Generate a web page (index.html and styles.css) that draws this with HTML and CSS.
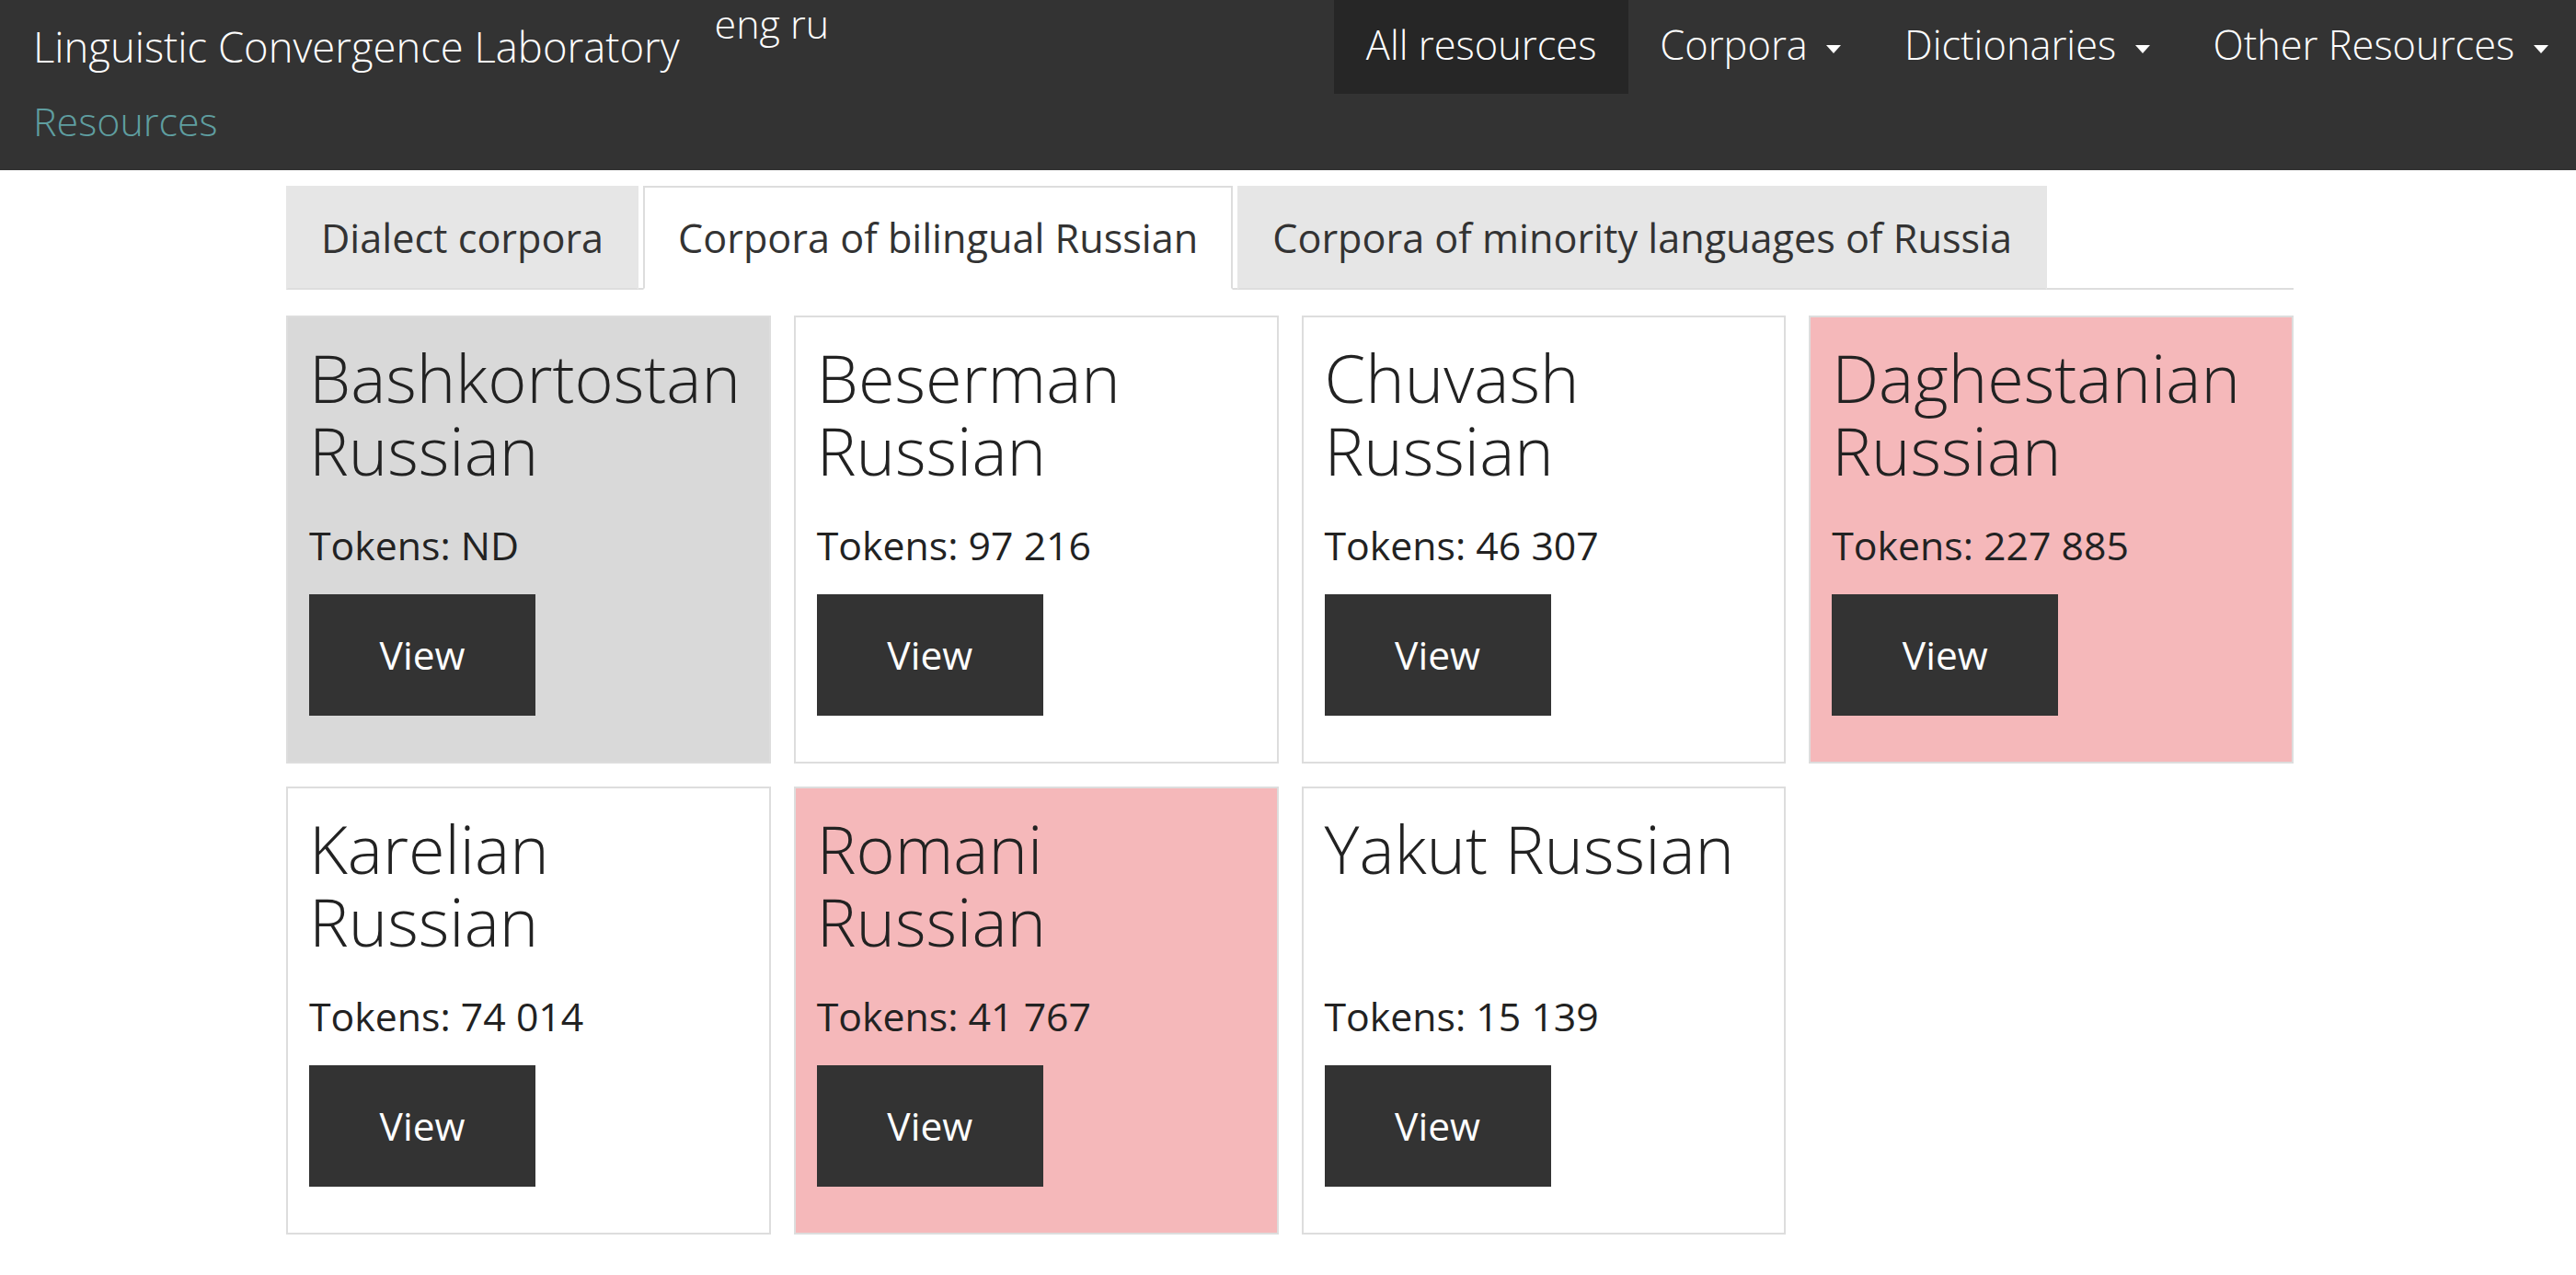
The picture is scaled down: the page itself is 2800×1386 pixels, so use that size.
FILE: index.html
```html
<!DOCTYPE html>
<html lang="en">
<head>
<meta charset="utf-8">
<title>Linguistic Convergence Laboratory — Resources</title>
<link rel="stylesheet" href="styles.css">
</head>
<body>
<header class="navbar">
  <div class="brand-col">
    <div class="brand-row">
      <a class="brand" href="#">Linguistic Convergence Laboratory</a>
      <span class="lang"><a href="#">eng</a> <a href="#">ru</a></span>
    </div>
    <div class="subtitle">Resources</div>
  </div>
  <nav class="menu">
    <a class="menu-item active" href="#">All resources</a>
    <a class="menu-item" href="#">Corpora <span class="caret"></span></a>
    <a class="menu-item" href="#">Dictionaries <span class="caret"></span></a>
    <a class="menu-item" href="#">Other Resources <span class="caret"></span></a>
  </nav>
</header>

<main class="container">
  <ul class="tabs">
    <li class="tab">Dialect corpora</li>
    <li class="tab active">Corpora of bilingual Russian</li>
    <li class="tab">Corpora of minority languages of Russia</li>
  </ul>

  <div class="cards">
    <div class="card card-gray">
      <h1 class="card-title">Bashkortostan Russian</h1>
      <p class="tokens">Tokens: ND</p>
      <a class="btn" href="#">View</a>
    </div>
    <div class="card">
      <h1 class="card-title">Beserman Russian</h1>
      <p class="tokens">Tokens: 97 216</p>
      <a class="btn" href="#">View</a>
    </div>
    <div class="card">
      <h1 class="card-title">Chuvash Russian</h1>
      <p class="tokens">Tokens: 46 307</p>
      <a class="btn" href="#">View</a>
    </div>
    <div class="card card-pink">
      <h1 class="card-title">Daghestanian Russian</h1>
      <p class="tokens">Tokens: 227 885</p>
      <a class="btn" href="#">View</a>
    </div>
    <div class="card">
      <h1 class="card-title">Karelian Russian</h1>
      <p class="tokens">Tokens: 74 014</p>
      <a class="btn" href="#">View</a>
    </div>
    <div class="card card-pink">
      <h1 class="card-title">Romani Russian</h1>
      <p class="tokens">Tokens: 41 767</p>
      <a class="btn" href="#">View</a>
    </div>
    <div class="card">
      <h1 class="card-title">Yakut Russian</h1>
      <p class="tokens">Tokens: 15 139</p>
      <a class="btn" href="#">View</a>
    </div>
  </div>
</main>
</body>
</html>
```
FILE: styles.css
```css
* { box-sizing: border-box; }

body {
  margin: 0;
  font-family: "Open Sans", "Noto Sans", "Liberation Sans", sans-serif;
  color: #222;
  background: #fff;
}

a { text-decoration: none; color: inherit; }

/* ---------- navbar ---------- */
.navbar {
  display: flex;
  justify-content: space-between;
  height: 185px;
  background: #333;
}

.brand-col {
  padding-left: 36px;
}

.brand-row {
  display: flex;
  align-items: flex-start;
  height: 102px;
}

.brand {
  font-size: 45.4px;
  font-weight: 300;
  line-height: 100px;
  color: #fff;
}

.lang {
  margin-left: 38px;
  font-size: 43px;
  font-weight: 300;
  line-height: 52px;
  color: #fff;
}

.subtitle {
  font-size: 43px;
  font-weight: 300;
  line-height: 60px;
  color: #5f9ea0;
}

.menu {
  display: flex;
  align-items: flex-start;
  margin-right: -4px;
}

.menu-item {
  display: block;
  height: 102px;
  padding: 0 34.5px;
  font-size: 43.4px;
  font-weight: 300;
  line-height: 98px;
  color: #fff;
  white-space: nowrap;
}

.menu-item.active {
  background: #262626;
}

.caret {
  display: inline-block;
  width: 0;
  height: 0;
  margin-left: 9px;
  vertical-align: middle;
  border-top: 9px solid #fff;
  border-left: 8px solid transparent;
  border-right: 8px solid transparent;
}

/* ---------- content ---------- */
.container {
  width: 2182px;
  margin-left: 311px;
}

.tabs {
  display: flex;
  margin: 17px 0 0;
  padding: 0;
  list-style: none;
  border-bottom: 2px solid #ddd;
}

.tab {
  margin-right: 5px;
  margin-bottom: -2px;
  padding: 24px 36px;
  font-size: 43.2px;
  line-height: 61px;
  color: #333;
  background: #e6e6e6;
  border: 2px solid #e6e6e6;
  border-bottom-color: #ddd;
}

.tab.active {
  background: #fff;
  border-color: #ddd;
  border-bottom-color: #fff;
}

.cards {
  display: grid;
  grid-template-columns: repeat(4, 1fr);
  gap: 25px;
  margin-top: 28px;
  padding-bottom: 40px;
}

.card {
  display: flex;
  flex-direction: column;
  align-items: flex-start;
  padding: 26px 23px 50px;
  background: #fff;
  border: 2px solid #ddd;
}

.card-gray { background: #d9d9d9; }
.card-pink { background: #f5b8ba; }

.card-title {
  min-height: 158px;
  margin: 0;
  font-size: 72px;
  font-weight: 300;
  line-height: 79px;
  color: #222;
}

.tokens {
  margin: 34px 0 0;
  font-size: 42.8px;
  line-height: 60px;
  color: #222;
}

.btn {
  display: block;
  width: 246px;
  height: 132px;
  margin-top: 23px;
  font-size: 42.5px;
  line-height: 132px;
  text-align: center;
  color: #fff;
  background: #333;
}
```
